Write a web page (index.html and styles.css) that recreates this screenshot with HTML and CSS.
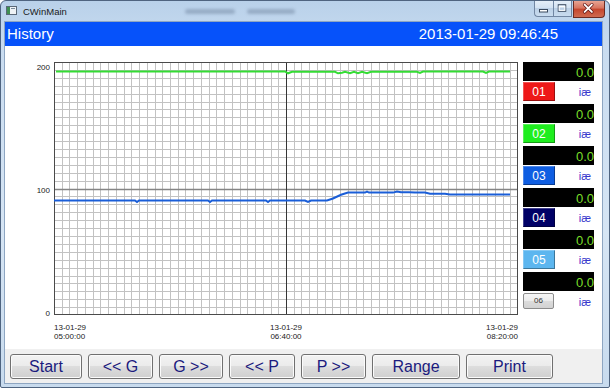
FILE: index.html
```html
<!DOCTYPE html>
<html>
<head>
<meta charset="utf-8">
<title>CWinMain</title>
<link rel="stylesheet" href="styles.css">
</head>
<body>
<div class="window">
  <div class="titlebar">
    <svg class="appicon" width="11" height="9" viewBox="0 0 11 9">
      <rect x="0.5" y="0.5" width="10" height="8" fill="#eef2f6" stroke="#5a6878"/>
      <rect x="1" y="1" width="3" height="7" fill="#3f8f52"/>
      <rect x="5" y="2" width="4" height="1" fill="#7a8a9a"/>
    </svg>
    <span class="title">CWinMain</span>
    <div class="ghost g1"></div>
    <div class="ghost g2"></div>
    <div class="caption">
      <div class="cbtn cmin">
        <svg width="19" height="16" viewBox="0 0 19 16"><rect x="5.5" y="9.5" width="8" height="2.5" fill="#fff" stroke="#3b4a5e" stroke-width="1"/></svg>
      </div>
      <div class="cbtn cmax">
        <svg width="19" height="16" viewBox="0 0 19 16"><rect x="5.5" y="4.5" width="8" height="7" fill="none" stroke="#3b4a5e" stroke-width="1"/><rect x="6.5" y="6.5" width="6" height="4" fill="none" stroke="#fff" stroke-width="1"/></svg>
      </div>
      <div class="cbtn cclose">
        <svg width="32" height="17" viewBox="0 0 32 17"><path d="M12 4.5L19.5 12M19.5 4.5L12 12" stroke="#5a1010" stroke-width="3.4" stroke-linecap="round"/><path d="M12 4.5L19.5 12M19.5 4.5L12 12" stroke="#fff" stroke-width="2" stroke-linecap="round"/></svg>
      </div>
    </div>
  </div>

  <div class="client">
    <div class="header">
      <span class="hname">History</span>
      <span class="hdate">2013-01-29 09:46:45</span>
    </div>

    <div class="main">
      <svg class="chart" width="518" height="303" viewBox="0 0 518 303">
        <g stroke="#c2c2c2" stroke-width="1" fill="none">
          <path d="M57.5 16V269M64.5 16V269M72.5 16V269M80.5 16V269M88.5 16V269M95.5 16V269M103.5 16V269M111.5 16V269M119.5 16V269M126.5 16V269M134.5 16V269M142.5 16V269M150.5 16V269M157.5 16V269M165.5 16V269M173.5 16V269M180.5 16V269M188.5 16V269M196.5 16V269M204.5 16V269M211.5 16V269M219.5 16V269M227.5 16V269M235.5 16V269M242.5 16V269M250.5 16V269M258.5 16V269M266.5 16V269M273.5 16V269M289.5 16V269M296.5 16V269M304.5 16V269M312.5 16V269M320.5 16V269M327.5 16V269M335.5 16V269M343.5 16V269M351.5 16V269M358.5 16V269M366.5 16V269M374.5 16V269M382.5 16V269M389.5 16V269M397.5 16V269M405.5 16V269M412.5 16V269M420.5 16V269M428.5 16V269M436.5 16V269M443.5 16V269M451.5 16V269M459.5 16V269M467.5 16V269M474.5 16V269M482.5 16V269M490.5 16V269M498.5 16V269M505.5 16V269"/>
          <path d="M49 24.5H513M49 32.5H513M49 40.5H513M49 48.5H513M49 56.5H513M49 63.5H513M49 71.5H513M49 79.5H513M49 87.5H513M49 95.5H513M49 103.5H513M49 111.5H513M49 119.5H513M49 127.5H513M49 135.5H513M49 150.5H513M49 158.5H513M49 166.5H513M49 174.5H513M49 182.5H513M49 190.5H513M49 198.5H513M49 206.5H513M49 214.5H513M49 222.5H513M49 230.5H513M49 237.5H513M49 245.5H513M49 253.5H513M49 261.5H513"/>
        </g>
        <path d="M49 143.5H513" stroke="#858585" stroke-width="1.6" fill="none"/>
        <path d="M281.5 16V269" stroke="#363636" stroke-width="1" fill="none"/>
        <rect x="49.5" y="16.5" width="463" height="252" fill="none" stroke="#4a4a4a" stroke-width="1"/>

        <path d="M51 25.5H280L283 27.3L287 25.8H330L333 27.3L337 26.8L340 25.8L345 27.3L349 25.8L353 27.3L357 25.8L362 27.2L366 25.8H412L415 27L418 25.6H478L481 27L484 25.6H505" stroke="#34dc34" stroke-width="2" fill="none"/>
        <path d="M49 154.5H130L132 156L134 154.5H203L205 156L207 154.5H261L263 156L265 154.5H300L303 156L306 154.5H322L328 152.5L336 148.8L343 146.6H360L362 145.6L364 146.6H388L392 145.6L396 146.2H404L410 146.5H420L425 147.8H440L445 148.6H505" stroke="#1a5ed8" stroke-width="2" fill="none"/>

        <g class="axis">
          <text x="45" y="24" text-anchor="end">200</text>
          <text x="45" y="147" text-anchor="end">100</text>
          <text x="45" y="270" text-anchor="end">0</text>
          <text x="49" y="284">13-01-29</text>
          <text x="49" y="293">05:00:00</text>
          <text x="281" y="284" text-anchor="middle">13-01-29</text>
          <text x="281" y="293" text-anchor="middle">06:40:00</text>
          <text x="513" y="284" text-anchor="end">13-01-29</text>
          <text x="513" y="293" text-anchor="end">08:20:00</text>
        </g>
      </svg>

      <div class="panel">
        <div class="ch">
          <div class="val">0.0</div>
          <div class="row"><span class="tag c1">01</span><span class="unit">iæ</span></div>
        </div>
        <div class="ch">
          <div class="val">0.0</div>
          <div class="row"><span class="tag c2">02</span><span class="unit">iæ</span></div>
        </div>
        <div class="ch">
          <div class="val">0.0</div>
          <div class="row"><span class="tag c3">03</span><span class="unit">iæ</span></div>
        </div>
        <div class="ch">
          <div class="val">0.0</div>
          <div class="row"><span class="tag c4">04</span><span class="unit">iæ</span></div>
        </div>
        <div class="ch">
          <div class="val">0.0</div>
          <div class="row"><span class="tag c5">05</span><span class="unit">iæ</span></div>
        </div>
        <div class="ch">
          <div class="val">0.0</div>
          <div class="row"><span class="tag c6">06</span><span class="unit">iæ</span></div>
        </div>
      </div>
    </div>

    <div class="toolbar">
      <div class="btn w-start">Start</div>
      <div class="btn w-gb">&lt;&lt; G</div>
      <div class="btn w-gf">G &gt;&gt;</div>
      <div class="btn w-pb">&lt;&lt; P</div>
      <div class="btn w-pf">P &gt;&gt;</div>
      <div class="btn w-range">Range</div>
      <div class="btn w-print">Print</div>
    </div>
  </div>
</div>
</body>
</html>
```
FILE: styles.css
```css
html, body {
  margin: 0;
  padding: 0;
}
body {
  width: 610px;
  height: 388px;
  overflow: hidden;
  font-family: "Liberation Sans", Arial, sans-serif;
  background: #ffffff;
}
.window {
  width: 610px;
  height: 388px;
  box-sizing: border-box;
  border: 1px solid #4f6480;
  border-radius: 6px 6px 2px 2px;
  background: linear-gradient(180deg, #b9d1ea 0%, #c9dcf0 12%, #d6e5f4 60%, #c8dbee 100%);
  display: flex;
  flex-direction: column;
}
.titlebar {
  height: 21px;
  display: flex;
  align-items: flex-start;
  flex: none;
}
.appicon {
  margin: 5px 0 0 5px;
  flex: none;
}
.title {
  margin: 5px 0 0 6px;
  font-size: 9.5px;
  line-height: 11px;
  color: #1a1a1a;
}
.ghost {
  height: 5px;
  margin-top: 8px;
  background: rgba(80, 100, 130, 0.35);
  filter: blur(1.6px);
  border-radius: 3px;
}
.g1 {
  width: 50px;
  margin-left: 118px;
}
.g2 {
  width: 48px;
  margin-left: 12px;
}
.caption {
  margin-left: auto;
  margin-right: 4px;
  display: flex;
  align-items: flex-start;
}
.cbtn {
  box-sizing: border-box;
  display: flex;
}
.cbtn svg {
  display: block;
}
.cmin, .cmax {
  width: 19px;
  height: 16px;
  background: linear-gradient(180deg, #e4eef8 0%, #d3e2f2 45%, #bcd0e6 50%, #c9dcef 100%);
  border: 1px solid #7186a2;
  border-top: none;
}
.cmin {
  border-radius: 0 0 0 4px;
  border-right: none;
}
.cmax {
  margin-right: 1px;
}
.cmin svg, .cmax svg {
  margin: -1px 0 0 -1px;
}
.cclose {
  width: 32px;
  height: 17px;
  background: linear-gradient(180deg, #e8a493 0%, #d7735e 45%, #c5452d 50%, #cf6a50 100%);
  border: 1px solid #6b2a22;
  border-top: none;
  border-radius: 0 0 4px 0;
}
.cclose svg {
  margin: -1px 0 0 -1px;
}
.client {
  margin: 0 7px 0 4px;
  width: 597px;
  display: flex;
  flex-direction: column;
  box-shadow: 0 0 0 1px #8ea6c2;
  flex: none;
}
.header {
  height: 24px;
  background: #0652fa;
  color: #ffffff;
  font-size: 15px;
  line-height: 24px;
  display: flex;
  justify-content: space-between;
  padding: 0 44px 0 2px;
}
.main {
  height: 303px;
  background: #ffffff;
  display: flex;
}
.chart {
  display: block;
  flex: none;
}
.axis text {
  font-family: "Liberation Sans", Arial, sans-serif;
  font-size: 8px;
  fill: #222222;
}
.panel {
  width: 71px;
  padding-top: 16px;
  display: flex;
  flex-direction: column;
}
.ch {
  margin-bottom: 2px;
}
.val {
  height: 19px;
  background: #000000;
  color: #7ade2a;
  font-size: 13px;
  line-height: 22px;
  text-align: right;
  overflow: hidden;
}
.row {
  margin-top: 1px;
  height: 20px;
  display: flex;
  align-items: flex-start;
  justify-content: space-between;
}
.tag {
  width: 32px;
  height: 19px;
  box-sizing: border-box;
  color: #ffffff;
  font-size: 12px;
  line-height: 18px;
  text-align: center;
  border: 1px solid rgba(0, 0, 0, 0.35);
  border-top-color: rgba(255, 255, 255, 0.25);
  border-left-color: rgba(255, 255, 255, 0.25);
}
.c1 { background: #ee1818; }
.c2 { background: #1fee1f; }
.c3 { background: #0f5ee2; }
.c4 { background: #000066; }
.c5 { background: #5cb6ef; }
.c6 {
  width: 31px;
  height: 16px;
  margin-top: 1px;
  color: #333333;
  font-size: 8px;
  line-height: 14px;
  border: 1px solid #8c8c8c;
  border-radius: 2px;
  background: linear-gradient(180deg, #f6f6f6 0%, #ececec 50%, #dcdcdc 51%, #d2d2d2 100%);
}
.unit {
  color: #3636cc;
  font-size: 11px;
  line-height: 20px;
  padding-right: 3px;
}
.toolbar {
  height: 34px;
  box-sizing: border-box;
  background: #f0f0f0;
  display: flex;
  align-items: flex-start;
  gap: 6px;
  padding: 5px 0 0 5px;
}
.btn {
  height: 25px;
  box-sizing: border-box;
  border: 1px solid #707070;
  border-radius: 3px;
  background: linear-gradient(180deg, #f3f3f3 0%, #ebebeb 48%, #dddddd 50%, #cfcfcf 100%);
  box-shadow: inset 0 0 0 1px #fbfbfb;
  color: #1b1b7e;
  font-size: 16px;
  display: flex;
  align-items: center;
  justify-content: center;
}
.w-start { width: 72px; }
.w-gb { width: 65px; }
.w-gf { width: 64px; }
.w-pb { width: 66px; }
.w-pf { width: 65px; }
.w-range { width: 88px; }
.w-print { width: 87px; }
```
